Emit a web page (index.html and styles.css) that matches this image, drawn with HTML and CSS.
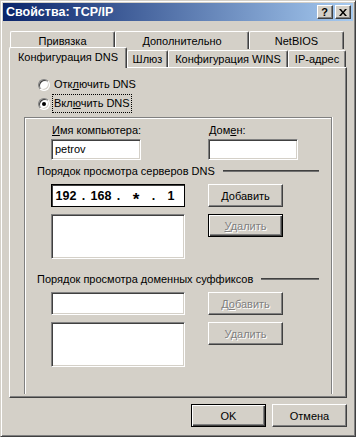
FILE: index.html
```html
<!DOCTYPE html>
<html lang="ru">
<head>
    <meta charset="UTF-8">
    <meta name="viewport" content="width=device-width, initial-scale=1.0">
    <title>Свойства: TCP/IP</title>
    <link rel="stylesheet" href="styles.css">
</head>
<body>
    <div class="window">
        <div class="titlebar">
            <span class="title">Свойства: TCP/IP</span>
            <div class="title-buttons">
                <div class="tbtn help">?</div>
                <div class="tbtn">
                    <svg width="8" height="7" viewBox="0 0 8 7">
                        <path d="M0 0h2l2 2.5L6 0h2L5 3.5 8 7H6L4 4.5 2 7H0l3-3.5z" fill="#000"/>
                    </svg>
                </div>
            </div>
        </div>

        <div class="client">
            <!-- tabs: back row, then front row with the selected tab -->
            <div class="tab-row back">
                <div class="tab" style="width: 105px">Привязка</div>
                <div class="tab" style="width: 134px">Дополнительно</div>
                <div class="tab" style="width: 95px">NetBIOS</div>
            </div>
            <div class="tab-row front">
                <div class="tab active" style="width: 118px">Конфигурация DNS</div>
                <div class="tab" style="width: 41px">Шлюз</div>
                <div class="tab" style="width: 120px">Конфигурация WINS</div>
                <div class="tab" style="width: 58px">IP-адрес</div>
            </div>

            <div class="panel">
                <div class="radio-row">
                    <span class="radio"></span>
                    <span class="radio-label">Отк<u>л</u>ючить DNS</span>
                </div>
                <div class="radio-row">
                    <span class="radio"><span class="dot"></span></span>
                    <span class="radio-label focus">Вкл<u>ю</u>чить DNS</span>
                </div>

                <div class="group">
                    <div class="fields">
                        <div class="field">
                            <div class="field-label"><u>И</u>мя компьютера:</div>
                            <div class="edit">petrov</div>
                        </div>
                        <div class="field">
                            <div class="field-label">Дом<u>е</u>н:</div>
                            <div class="edit"></div>
                        </div>
                    </div>

                    <div class="section">
                        <span>Порядок просмотра серверов DNS</span>
                        <span class="rule"></span>
                    </div>
                    <div class="list-block">
                        <div class="ip-edit">
                            <span class="octet">192</span><span class="ip-dot">.</span>
                            <span class="octet">168</span><span class="ip-dot">.</span>
                            <span class="octet star">*</span><span class="ip-dot">.</span>
                            <span class="octet">1</span>
                        </div>
                        <div class="btn"><span><u>Д</u>обавить</span></div>
                        <div class="listbox"></div>
                        <div class="btn default disabled"><span><u>У</u>далить</span></div>
                    </div>

                    <div class="section second">
                        <span>Порядок просмотра доменных суффиксов</span>
                        <span class="rule"></span>
                    </div>
                    <div class="list-block">
                        <div class="edit wide"></div>
                        <div class="btn disabled"><span>Д<u>о</u>бавить</span></div>
                        <div class="listbox"></div>
                        <div class="btn disabled"><span>У<u>д</u>алить</span></div>
                    </div>
                </div>
            </div>

            <div class="footer">
                <div class="btn default">OK</div>
                <div class="btn">Отмена</div>
            </div>
        </div>
    </div>
</body>
</html>
```

FILE: styles.css
```css
* {
    margin: 0;
    padding: 0;
    box-sizing: border-box;
}

body {
    background-color: #d4d0c8;
    font-family: "Liberation Sans", Arial, sans-serif;
    font-size: 11px;
    color: #000;
}

u {
    text-underline-offset: 1px;
}

.window {
    width: 356px;
    height: 437px;
    padding: 2px;
    background-color: #d4d0c8;
    border: 1px solid;
    border-color: #d4d0c8 #404040 #404040 #d4d0c8;
    box-shadow: inset 1px 1px #fff, inset -1px -1px #808080;
    display: flex;
    flex-direction: column;
}

/* title bar */
.titlebar {
    height: 18px;
    padding: 0 2px 0 3px;
    background: linear-gradient(to right, #0a246a, #a6caf0);
    display: flex;
    align-items: center;
    justify-content: space-between;
}

.title {
    color: #fff;
    font-weight: bold;
    font-size: 12.5px;
}

.title-buttons {
    display: flex;
    gap: 2px;
}

.tbtn {
    width: 16px;
    height: 14px;
    background-color: #d4d0c8;
    border: 1px solid;
    border-color: #fff #404040 #404040 #fff;
    box-shadow: inset -1px -1px #808080;
    display: flex;
    align-items: center;
    justify-content: center;
}

.tbtn.help {
    font-weight: bold;
    font-size: 11px;
    line-height: 12px;
    padding-right: 1px;
}

.tbtn svg {
    display: block;
    margin-left: -1px;
}

.client {
    flex: 1;
    padding: 10px 6px 0;
    display: flex;
    flex-direction: column;
}

/* tabs */
.tab-row {
    display: flex;
    height: 18px;
}

.tab-row.back {
    padding-left: 1px;
}

.tab-row.front {
    align-items: flex-end;
}

.tab {
    height: 18px;
    background-color: #d4d0c8;
    border-top: 1px solid #fff;
    border-left: 1px solid #fff;
    border-right: 1px solid #404040;
    border-radius: 2px 2px 0 0;
    box-shadow: inset -1px 0 #808080;
    display: flex;
    align-items: center;
    justify-content: center;
    white-space: nowrap;
}

.tab-row.front .tab {
    height: 17px;
}

.tab-row.front .tab.active {
    height: 21px;
    margin-bottom: -1px;
    padding-bottom: 3px;
    position: relative;
    z-index: 1;
}

/* tab page */
.panel {
    height: 331px;
    padding: 7px 14px 3px;
    border: 1px solid;
    border-color: #fff #404040 #404040 #fff;
    box-shadow: inset -1px -1px #808080;
    display: flex;
    flex-direction: column;
}

.radio-row {
    height: 19px;
    padding-left: 14px;
    display: flex;
    align-items: center;
}

.radio {
    width: 12px;
    height: 12px;
    margin-right: 2px;
    border-radius: 50%;
    background-color: #fff;
    border: 1px solid;
    border-color: #808080 #fff #fff #808080;
    box-shadow: inset 1px 1px #404040, inset -1px -1px #d4d0c8;
    display: flex;
    align-items: center;
    justify-content: center;
}

.dot {
    width: 4px;
    height: 4px;
    border-radius: 50%;
    background-color: #000;
}

.radio-label {
    height: 19px;
    line-height: 17px;
    padding: 0 1px;
    border: 1px dotted transparent;
}

.radio-label.focus {
    border-color: #000;
}

.group {
    flex: 1;
    margin-top: 4px;
    padding-top: 6px;
    border: 1px solid #808080;
    border-bottom: none;
    box-shadow: inset 1px 1px #fff, 1px 0 #fff;
}

.fields {
    display: grid;
    grid-template-columns: 134px 90px;
    column-gap: 23px;
    padding-left: 26px;
}

.field-label {
    height: 13px;
    line-height: 13px;
    padding-left: 1px;
    margin-bottom: 2px;
}

.edit {
    width: 90px;
    height: 21px;
    padding-left: 3px;
    line-height: 19px;
    background-color: #fff;
    border: 1px solid;
    border-color: #808080 #fff #fff #808080;
    box-shadow: inset 1px 1px #404040, inset -1px -1px #d4d0c8;
}

.edit.wide {
    width: 134px;
    height: 23px;
}

.section {
    height: 13px;
    margin: 4px 12px 0;
    display: flex;
    align-items: center;
    gap: 8px;
    white-space: nowrap;
}

.section.second {
    margin-top: 13px;
}

.rule {
    flex: 1;
    height: 2px;
    border-top: 1px solid #404040;
    border-bottom: 1px solid #707070;
}

.list-block {
    margin-top: 7px;
    padding-left: 26px;
    display: grid;
    grid-template-columns: 134px 75px;
    column-gap: 23px;
    row-gap: 7px;
    align-items: start;
}

.ip-edit {
    height: 23px;
    padding-left: 1px;
    background-color: #fff;
    border: 1px solid #000;
    box-shadow: inset 1px 1px #404040;
    display: flex;
    align-items: center;
    font-weight: bold;
    font-size: 12.5px;
}

.octet {
    width: 26px;
    text-align: center;
}

.octet.star {
    font-size: 17px;
    padding-top: 9px;
}

.ip-dot {
    width: 9px;
    text-align: center;
}

.listbox {
    height: 45px;
    background-color: #fff;
    border: 1px solid;
    border-color: #808080 #fff #fff #808080;
    box-shadow: inset 1px 1px #404040, inset -1px -1px #d4d0c8;
}

/* push buttons */
.btn {
    width: 75px;
    height: 23px;
    background-color: #d4d0c8;
    border: 1px solid;
    border-color: #fff #404040 #404040 #fff;
    box-shadow: inset -1px -1px #808080;
    display: flex;
    align-items: center;
    justify-content: center;
}

.btn.default {
    border-color: #000;
    box-shadow: inset 1px 1px #fff, inset -1px -1px #404040, inset -2px -2px #808080;
}

.btn.disabled {
    color: #808080;
    text-shadow: 1px 1px 0 #fff;
}

.footer {
    margin-top: 6px;
    display: flex;
    justify-content: flex-end;
    gap: 6px;
}
```
